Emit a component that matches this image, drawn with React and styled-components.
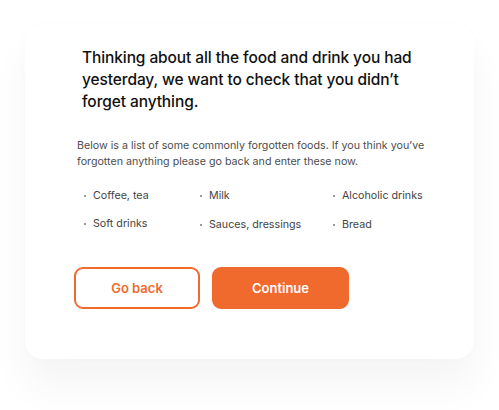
import React from 'react';
import styled, { createGlobalStyle } from 'styled-components';

const GlobalStyle = createGlobalStyle`
  body {
    margin: 0;
    background: #ffffff;
    font-family: Inter, "Noto Sans", sans-serif;
  }
`;

const Page = styled.div`
  width: 499px;
  height: 410px;
  padding: 25px 0 0 25px;
  box-sizing: border-box;
`;

const Card = styled.div`
  width: 449px;
  height: 334px;
  box-sizing: border-box;
  padding: 22px 0 0 49px;
  background: #ffffff;
  border-radius: 18px;
  box-shadow: 0 28px 40px rgba(0, 0, 0, 0.045), 0 0 12px rgba(0, 0, 0, 0.015);
`;

const Heading = styled.h1`
  margin: 0 0 0 8px;
  width: 340px;
  font-size: 15.5px;
  line-height: 22px;
  font-weight: 500;
  color: #111111;
  letter-spacing: -0.1px;
`;

const Intro = styled.p`
  margin: 25px 0 0 3px;
  width: 365px;
  font-size: 10.7px;
  line-height: 16px;
  color: #4d4d4d;
`;

const FoodList = styled.ul`
  list-style: none;
  margin: 18px 0 0 10px;
  padding: 0;
  display: grid;
  grid-template-columns: 116px 133px auto;
  row-gap: 10px;
`;

const FoodItem = styled.li`
  display: flex;
  align-items: center;
  gap: 7px;
  font-size: 10.7px;
  line-height: 16px;
  color: #444444;
  margin-top: ${p => (p.$shift ? '3px' : '0')};

  &::before {
    content: '';
    width: 2px;
    height: 2px;
    border-radius: 50%;
    background: #777777;
  }
`;

const Actions = styled.div`
  display: flex;
  gap: 12px;
  margin-top: 34px;
`;

const Button = styled.button`
  height: 42px;
  width: ${p => p.$width}px;
  box-sizing: border-box;
  border-radius: 9px;
  border: 2px solid #f06a2e;
  background: ${p => (p.$primary ? '#f06a2e' : '#ffffff')};
  color: ${p => (p.$primary ? '#ffffff' : '#f06a2e')};
  font-family: Inter, "Noto Sans", sans-serif;
  font-size: 13px;
  font-weight: 600;
  cursor: pointer;
`;

const foods = [
  { name: 'Coffee, tea' },
  { name: 'Milk' },
  { name: 'Alcoholic drinks' },
  { name: 'Soft drinks' },
  { name: 'Sauces, dressings', shift: true },
  { name: 'Bread', shift: true },
];

export default function App() {
  return (
    <>
      <GlobalStyle />
      <Page>
        <Card>
          <Heading>
            Thinking about all the food and drink you had yesterday, we want to check that you didn’t forget anything.
          </Heading>
          <Intro>
            Below is a list of some commonly forgotten foods. If you think you’ve forgotten anything please go back and enter these now.
          </Intro>
          <FoodList>
            {foods.map(f => (
              <FoodItem key={f.name} $shift={f.shift}>
                {f.name}
              </FoodItem>
            ))}
          </FoodList>
          <Actions>
            <Button $width={126}>Go back</Button>
            <Button $width={137} $primary>
              Continue
            </Button>
          </Actions>
        </Card>
      </Page>
    </>
  );
}
